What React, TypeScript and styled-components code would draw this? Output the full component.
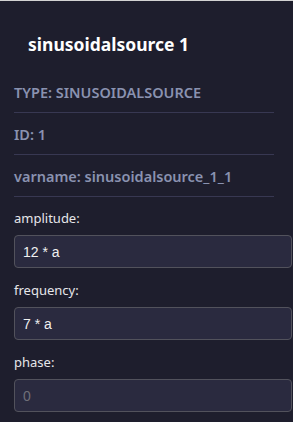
import React from 'react';
import styled, { createGlobalStyle } from 'styled-components';

const GlobalStyle = createGlobalStyle`
  body {
    margin: 0;
    background: #1e1e2d;
  }
`;

const Panel = styled.div`
  min-height: 421px;
  border-top: 1px solid #d3d3d3;
  background: #1e1e2d;
  padding: 0 19px 0 14px;
  font-family: "Noto Sans", "Open Sans", sans-serif;
  overflow: hidden;
`;

const Title = styled.h3`
  margin: 31px 0 26px;
  padding-left: 14px;
  font-size: 17.5px;
  line-height: 24px;
  font-weight: 700;
  color: #ffffff;
`;

const MetaRow = styled.div`
  padding-bottom: 10px;
  margin-bottom: 11px;
  border-bottom: 1px solid #383852;
  font-size: 14.5px;
  line-height: 20px;
  font-weight: 600;
  color: #8a92b0;
`;

const Field = styled.div`
  margin-bottom: 12px;
`;

const Label = styled.label`
  display: block;
  margin-bottom: 7px;
  font-size: 13px;
  line-height: 20px;
  color: #e6e6ea;
`;

const Input = styled.input`
  display: block;
  width: 100%;
  height: 31px;
  padding: 0 8px;
  margin: 0;
  border: 1px solid #52525c;
  border-radius: 4px;
  background: #2a2a3f;
  color: #f0f0f0;
  font-family: "Liberation Sans", Arial, sans-serif;
  font-size: 14px;
  outline: none;

  &::placeholder {
    color: #6f6f78;
  }
`;

const fields = [
  { name: 'amplitude', value: '12 * a' },
  { name: 'frequency', value: '7 * a' },
  { name: 'phase', value: '' },
];

const App: React.FC = () => (
  <>
    <GlobalStyle />
    <Panel>
      <Title>sinusoidalsource 1</Title>
      <MetaRow>TYPE: SINUSOIDALSOURCE</MetaRow>
      <MetaRow>ID: 1</MetaRow>
      <MetaRow>varname: sinusoidalsource_1_1</MetaRow>
      {fields.map((f) => (
        <Field key={f.name}>
          <Label>{f.name}:</Label>
          <Input defaultValue={f.value} placeholder="0" />
        </Field>
      ))}
    </Panel>
  </>
);

export default App;
